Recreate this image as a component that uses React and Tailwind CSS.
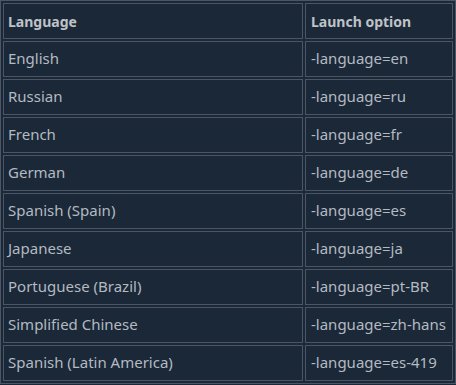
import React from "react";

const ROWS = [
  ["English", "-language=en"],
  ["Russian", "-language=ru"],
  ["French", "-language=fr"],
  ["German", "-language=de"],
  ["Spanish (Spain)", "-language=es"],
  ["Japanese", "-language=ja"],
  ["Portuguese (Brazil)", "-language=pt-BR"],
  ["Simplified Chinese", "-language=zh-hans"],
  ["Spanish (Latin America)", "-language=es-419"],
];

export default function App() {
  return (
    <div className="w-[456px] h-[385px] bg-[#1b2838] font-['Noto_Sans',sans-serif] text-[15px] text-[#b3bac1]">
      <table className="border border-[#4b5564] border-separate border-spacing-[2px] w-[456px]">
        <thead>
          <tr>
            <th className="w-[300px] h-[36px] box-border border border-[#4b5564] pl-[4px] text-left text-[14px] font-bold text-[#bfc3c7]">
              Language
            </th>
            <th className="w-[148px] h-[36px] box-border border border-[#4b5564] pl-[5px] text-left text-[14px] font-bold text-[#bfc3c7]">
              Launch option
            </th>
          </tr>
        </thead>
        <tbody>
          {ROWS.map(([lang, opt]) => (
            <tr key={lang}>
              <td className="h-[36px] box-border border border-[#4b5564] pl-[4px] pb-[2px]">{lang}</td>
              <td className="h-[36px] box-border border border-[#4b5564] pl-[5px] pb-[2px]">{opt}</td>
            </tr>
          ))}
        </tbody>
      </table>
    </div>
  );
}
